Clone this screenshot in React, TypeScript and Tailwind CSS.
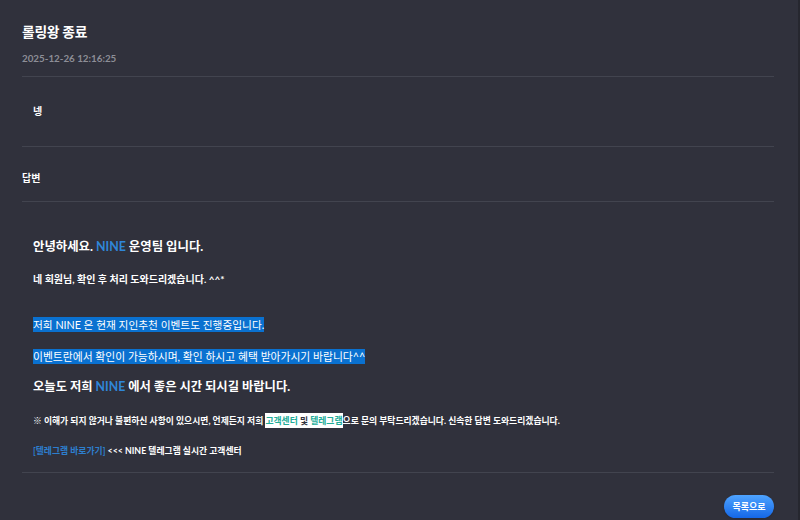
import React from 'react';

const font = { fontFamily: 'Lato, "Noto Sans CJK KR", sans-serif' };

export default function App() {
  return (
    <div className="w-[800px] h-[520px] bg-[#30313c] text-white overflow-hidden border-r-2 border-[#26272f]" style={font}>
      <div className="pl-[22px] pr-[24px]">
        <div className="pt-[22px] h-[77px] border-b border-[#42444f]">
          <h1 className="text-[13.8px] font-bold leading-[20px] tracking-[-0.02em]">롤링왕 종료</h1>
          <p className="mt-[9px] text-[9.8px] font-bold leading-[14px] text-[#8d8e97]">2025-12-26 12:16:25</p>
        </div>

        <div className="h-[70px] border-b border-[#42444f] pl-[11px] flex items-center">
          <p className="text-[10px] font-bold">넹</p>
        </div>

        <div className="h-[55px] border-b border-[#42444f] flex items-center pt-[8px]">
          <h2 className="text-[10px] font-bold">답변</h2>
        </div>

        <div className="pl-[11px] pt-[36px] h-[271px] border-b border-[#42444f]">
          <p className="text-[12.4px] font-bold leading-[18px]">
            안녕하세요. <span className="text-[#2f86d8]">NINE</span> 운영팀 입니다.
          </p>
          <p className="mt-[16px] text-[10px] font-bold leading-[14px]">네 회원님, 확인 후 처리 도와드리겠습니다. ^^*</p>

          <p className="mt-[32px] text-[10.7px] leading-[14px]">
            <span className="bg-[#0a71d0] py-[1px]">저희 NINE 은 현재 지인추천 이벤트도 진행중입니다.</span>
          </p>
          <p className="mt-[18px] text-[10.8px] leading-[14px]">
            <span className="bg-[#0a71d0] py-[1px]">이벤트란에서 확인이 가능하시며, 확인 하시고 혜택 받아가시기 바랍니다^^</span>
          </p>

          <p className="mt-[14px] text-[12.3px] font-bold leading-[18px]">
            오늘도 저희 <span className="text-[#2f86d8]">NINE</span> 에서 좋은 시간 되시길 바랍니다.
          </p>

          <p className="mt-[19px] text-[8.8px] font-bold leading-[12px]">
            ※ 이해가 되지 않거나 불편하신 사항이 있으시면, 언제든지 저희{' '}
            <span className="bg-white text-[#30313c] py-[2px]">
              <span className="text-[#21ac98]">고객센터</span> 및 <span className="text-[#21ac98]">텔레그램</span>
            </span>
            으로 문의 부탁드리겠습니다. 신속한 답변 도와드리겠습니다.
          </p>

          <p className="mt-[18px] text-[8.8px] font-bold leading-[12px]">
            <span className="text-[#2d7fcf]">[텔레그램 바로가기]</span> &lt;&lt;&lt; NINE 텔레그램 실시간 고객센터
          </p>
        </div>

        <div className="flex justify-end pt-[22px]">
          <button className="w-[50px] h-[23px] rounded-full bg-gradient-to-b from-[#4ea3ff] to-[#1467e6] text-[9px] font-bold text-white shadow">
            목록으로
          </button>
        </div>
      </div>
    </div>
  );
}
